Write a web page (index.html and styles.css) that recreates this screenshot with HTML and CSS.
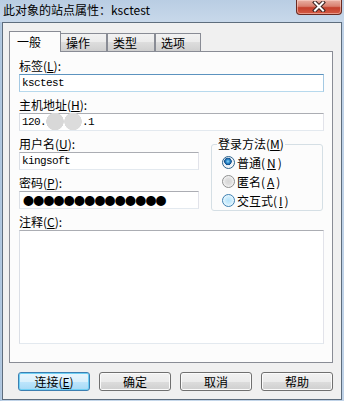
FILE: index.html
```html
<!DOCTYPE html>
<html lang="zh-CN">
<head>
  <meta charset="UTF-8" />
  <meta name="viewport" content="width=device-width, initial-scale=1.0" />
  <title>此对象的站点属性</title>
  <link rel="stylesheet" href="styles.css">
</head>
<body>
  <div class="window">
    <div class="titlebar">
      <span class="title">此对象的站点属性：ksctest</span>
      <span class="close">
        <svg width="14" height="11" viewBox="0 0 14 11">
          <path d="M3 1.5 L11 9.5 M11 1.5 L3 9.5" stroke="#3b2320" stroke-width="4" stroke-linecap="square" fill="none"/>
          <path d="M3 1.5 L11 9.5 M11 1.5 L3 9.5" stroke="#ffffff" stroke-width="2" stroke-linecap="square" fill="none"/>
        </svg>
      </span>
    </div>

    <div class="client">
      <div class="tabs">
        <div class="tab active">一般</div>
        <div class="tab t2">操作</div>
        <div class="tab t3">类型</div>
        <div class="tab t4">选项</div>
      </div>

      <div class="panel">
        <label class="lbl">标签(<u>L</u>):</label>
        <div class="edit hot">ksctest</div>

        <label class="lbl">主机地址(<u>H</u>):</label>
        <div class="edit">120.<span class="blur"></span>.1</div>

        <div class="row">
          <div class="col">
            <label class="lbl">用户名(<u>U</u>):</label>
            <div class="edit">kingsoft</div>

            <label class="lbl">密码(<u>P</u>):</label>
            <div class="edit pass">●●●●●●●●●●●●●●</div>
          </div>

          <fieldset class="group">
            <legend>登录方法(<u>M</u>)</legend>
            <label class="opt"><input type="radio" name="login" checked> 普通(<u>N</u>)</label>
            <label class="opt"><input type="radio" name="login"> 匿名(<u>A</u>)</label>
            <label class="opt"><input type="radio" name="login" class="hover"> 交互式(<u>I</u>)</label>
          </fieldset>
        </div>

        <label class="lbl">注释(<u>C</u>):</label>
        <textarea class="memo"></textarea>
      </div>

      <div class="buttons">
        <button class="btn default">连接(<u>E</u>)</button>
        <button class="btn">确定</button>
        <button class="btn">取消</button>
        <button class="btn">帮助</button>
      </div>
    </div>
  </div>
</body>
</html>
```

FILE: styles.css
```css
html, body {
  margin: 0;
  padding: 0;
}
body {
  width: 344px;
  height: 401px;
  overflow: hidden;
  font-family: "Noto Sans CJK SC", "Liberation Sans", sans-serif;
  font-size: 12px;
  color: #000;
}
u {
  text-decoration: underline;
}

/* window frame */
.window {
  height: 401px;
  box-sizing: border-box;
  padding: 0 2px 1px 2px;
  display: flex;
  flex-direction: column;
  background: linear-gradient(90deg, #a9c2dc 0, #bfd2e7 3px, #c6d8eb 50%, #bfd2e7 100%);
}
.titlebar {
  height: 22px;
  flex: none;
  display: flex;
  justify-content: space-between;
  align-items: flex-start;
  background: linear-gradient(#b9cde3, #c8d8ea);
  margin: 0 -2px;
  padding: 0 2px;
}
.title {
  padding-left: 1px;
  line-height: 20px;
}
.close {
  width: 46px;
  height: 15px;
  box-sizing: border-box;
  display: flex;
  align-items: center;
  justify-content: center;
  border: 1px solid #6a2a20;
  border-top: none;
  border-radius: 0 0 4px 4px;
  background: linear-gradient(#e9b1a4 0, #d9806f 45%, #c4402c 55%, #d45a44 100%);
  box-shadow: inset 0 0 0 1px rgba(255, 220, 210, 0.5);
}
.close svg {
  display: block;
  margin-top: -1px;
}

.client {
  flex: 1;
  border: 1px solid #5e6d7d;
  background: #f0f0f0;
  padding: 8px 8px 0 6px;
}

/* tabs */
.tabs {
  display: flex;
  align-items: flex-end;
  height: 21px;
  margin-bottom: -1px;
  position: relative;
  z-index: 1;
}
.tab {
  box-sizing: border-box;
  height: 18px;
  padding-left: 5px;
  line-height: 17px;
  border: 1px solid #898c95;
  border-bottom: none;
  background: linear-gradient(#f2f2f2, #ebebeb 50%, #dddddd 50%, #cfcfcf);
  margin-bottom: 1px;
}
.tab.active {
  width: 52px;
  height: 21px;
  padding-left: 7px;
  line-height: 20px;
  background: #fcfcfc;
  margin-bottom: 0;
}
.t2 { width: 47px; margin-left: -1px; }
.t3 { width: 48px; }
.t4 { width: 46px; }

.panel {
  box-sizing: border-box;
  height: 312px;
  border: 1px solid #898c95;
  background: #fcfcfc;
  padding: 7px 8px 0 9px;
}
.lbl {
  display: block;
  line-height: 14px;
  margin-bottom: 1px;
}
.edit {
  box-sizing: border-box;
  height: 18px;
  margin-bottom: 6px;
  padding: 0 2px;
  border: 1px solid;
  border-color: #abadb3 #e2e3ea #e3e9ef #dbdfe6;
  background: #fff;
  font-family: "Liberation Mono", monospace;
  font-size: 11px;
  letter-spacing: -0.6px;
  line-height: 16px;
  white-space: nowrap;
}
.edit.hot {
  border-color: #5c93bf #a4c9e3 #b7d9ed #a4c9e3;
}
.edit.pass {
  font-family: "Noto Sans CJK SC", sans-serif;
  font-size: 11px;
  letter-spacing: -0.8px;
  padding-left: 3px;
}
.blur {
  display: inline-block;
  width: 36px;
  height: 17px;
  margin: -1px 0;
  vertical-align: top;
  background:
    radial-gradient(circle at 9px 8.5px, #d8d8d8 8.5px, transparent 9px),
    radial-gradient(circle at 27px 8.5px, #dcdcdc 8.5px, transparent 9px);
}

.row {
  display: flex;
  align-items: flex-start;
}
.col {
  width: 180px;
}
.group {
  width: 112px;
  height: 74px;
  box-sizing: border-box;
  margin: 0 0 0 12px;
  padding: 2px 0 0 10px;
  border: 1px solid #d5dfe5;
  border-radius: 3px;
  min-width: 0;
}
.group legend {
  padding: 0 1px;
  margin-left: -5px;
  line-height: 14px;
}
.opt {
  display: flex;
  align-items: center;
  height: 19px;
  gap: 2px;
}
.opt input {
  appearance: none;
  -webkit-appearance: none;
  width: 13px;
  height: 13px;
  margin: 0;
  border: 1px solid #8e8f8f;
  border-radius: 50%;
  box-sizing: border-box;
  background: radial-gradient(circle at 50% 50%, #d6d6d6 0, #dedede 3px, #f4f4f4 5.5px);
}
.opt input:checked {
  border-color: #2c628b;
  background: radial-gradient(circle at 45% 40%, #8cd6f8 0, #2a86c8 2px, #0f4c8a 3.5px, #e8eef4 4px, #f4f6f8 5.5px);
}
.opt input.hover {
  border-color: #3c7fb1;
  background: radial-gradient(circle at 50% 50%, #b6e2fa 0, #c9ebfc 3px, #e9f7fe 5.5px);
}

.memo {
  display: block;
  box-sizing: border-box;
  width: 305px;
  height: 114px;
  margin: 0;
  resize: none;
  border: 1px solid;
  border-color: #abadb3 #e2e3ea #e3e9ef #dbdfe6;
  background: #fff;
}

/* bottom buttons */
.buttons {
  display: flex;
  justify-content: flex-end;
  gap: 9px;
  margin-top: 9px;
}
.btn {
  width: 72px;
  height: 19px;
  box-sizing: border-box;
  padding: 0;
  border: 1px solid #707070;
  border-radius: 3px;
  background: linear-gradient(#f2f2f2, #ebebeb 50%, #dddddd 50%, #cfcfcf);
  box-shadow: inset 0 0 0 1px #fbfbfb;
  font-family: "Noto Sans CJK SC", sans-serif;
  font-size: 12px;
  line-height: 16px;
  color: #000;
}
.btn.default {
  border-color: #3c7fb1;
  background: linear-gradient(#eaf6fd, #d9f0fc 50%, #bee6fd 50%, #a7d9f5);
  box-shadow: inset 0 0 0 1px #6fd0f5;
}
```
